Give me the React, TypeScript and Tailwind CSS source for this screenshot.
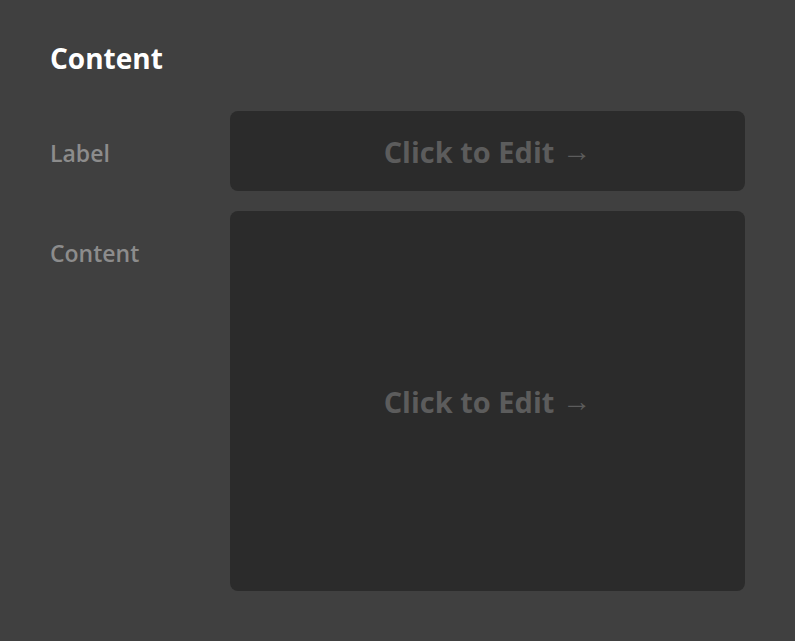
export default function App() {
  return (
    <div className="min-h-screen w-full bg-[#404040] px-[50px] pt-[38px] pb-[49px] font-['Open_Sans',sans-serif]">
      <h2 className="text-[28px] font-bold leading-[40px] text-white">Content</h2>
      <div className="mt-[33px] flex flex-col gap-[20px]">
        <div className="flex">
          <div className="w-[180px] shrink-0 pt-[24px] text-[23px] font-semibold leading-[36px] text-[#8c8c8c]">Label</div>
          <button className="flex h-[80px] flex-1 items-center justify-center gap-[8px] rounded-lg bg-[#2b2b2b] pt-[1px] text-[29px] font-bold text-[#5c5c5c]">
            Click to Edit
            <span className="font-['Liberation_Sans',sans-serif] font-normal">→</span>
          </button>
        </div>
        <div className="flex">
          <div className="w-[180px] shrink-0 pt-[24px] text-[23px] font-semibold leading-[36px] text-[#8c8c8c]">Content</div>
          <button className="flex h-[380px] flex-1 items-center justify-center gap-[8px] rounded-lg bg-[#2b2b2b] pt-[1px] text-[29px] font-bold text-[#5c5c5c]">
            Click to Edit
            <span className="font-['Liberation_Sans',sans-serif] font-normal">→</span>
          </button>
        </div>
      </div>
    </div>
  );
}
